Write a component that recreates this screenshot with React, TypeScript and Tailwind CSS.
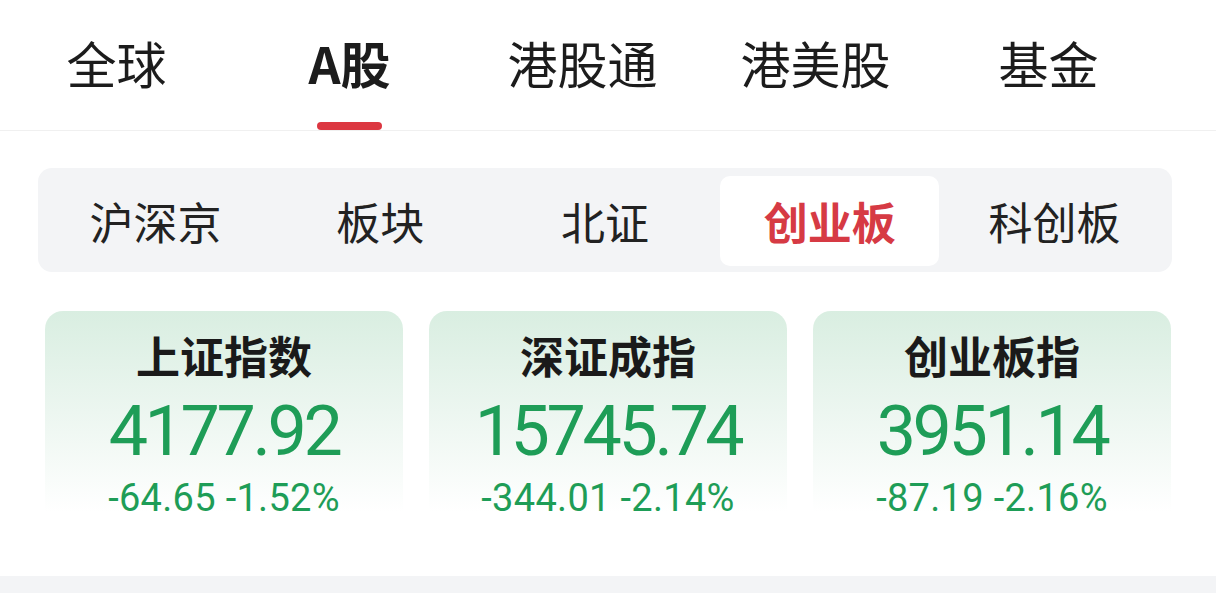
const CJK = "font-['Noto_Sans_CJK_SC','Noto_Sans',sans-serif]";
const NUM = "font-['Roboto','Noto_Sans',sans-serif]";

const topTabs = ["全球", "A股", "港股通", "港美股", "基金"];
const subTabs = ["沪深京", "板块", "北证", "创业板", "科创板"];

const indices = [
  { name: "上证指数", price: "4177.92", change: "-64.65", pct: "-1.52%" },
  { name: "深证成指", price: "15745.74", change: "-344.01", pct: "-2.14%" },
  { name: "创业板指", price: "3951.14", change: "-87.19", pct: "-2.16%" },
];

function TopTabs({ active }: { active: number }) {
  return (
    <header className="h-[131px] border-b border-[#f0f0f0]">
      <nav className="grid h-full w-[1165px] grid-cols-5">
        {topTabs.map((t, i) => (
          <div key={t} className="flex h-full flex-col items-center">
            <span
              className={`pt-[33px] text-[50px] leading-[58px] text-[#1c1c1c] ${
                i === active ? "font-bold" : "font-normal"
              }`}
            >
              {t}
            </span>
            {i === active ? (
              <span className="mt-auto h-2 w-[65px] rounded-full bg-[#dc3741]" />
            ) : null}
          </div>
        ))}
      </nav>
    </header>
  );
}

function SubTabs({ active }: { active: number }) {
  return (
    <div className="ml-[38px] mt-[37px] h-[104px] w-[1134px] rounded-[14px] bg-[#f3f4f6] px-2 pb-[6px] pt-2">
      <div className="grid h-full grid-cols-5 gap-[6px]">
        {subTabs.map((t, i) => (
          <div
            key={t}
            className={`flex items-center justify-center rounded-[10px] text-[44px] leading-none ${
              i === active
                ? "bg-white font-bold text-[#d63a44]"
                : "text-[#222222]"
            }`}
          >
            {t}
          </div>
        ))}
      </div>
    </div>
  );
}

function IndexCard({
  name,
  price,
  change,
  pct,
}: {
  name: string;
  price: string;
  change: string;
  pct: string;
}) {
  return (
    <div className="flex h-[201px] flex-col items-center rounded-t-[18px] bg-gradient-to-b from-[#d9eee1] via-[#ecf6f0] to-white">
      <div className="pt-[20px] text-[44px] font-bold leading-[48px] text-[#1a1a1a]">
        {name}
      </div>
      <div
        className={`${NUM} mt-[20px] text-[70px] leading-[64px] tracking-[-3.4px] text-[#1e9d57]`}
      >
        {price}
      </div>
      <div
        className={`${NUM} mt-[18px] text-[38px] leading-[34px] tracking-[0.3px] text-[#1e9d57]`}
      >
        {change} {pct}
      </div>
    </div>
  );
}

export default function App() {
  return (
    <div className={`${CJK} h-[615px] w-[1216px] overflow-hidden bg-white`}>
      <TopTabs active={1} />
      <SubTabs active={3} />
      <section className="ml-[45px] mt-[39px] grid w-[1126px] grid-cols-3 gap-[26px]">
        {indices.map((idx) => (
          <IndexCard key={idx.name} {...idx} />
        ))}
      </section>
      <div className="mt-[64px] h-[17px] bg-[#f3f4f6]" />
    </div>
  );
}
